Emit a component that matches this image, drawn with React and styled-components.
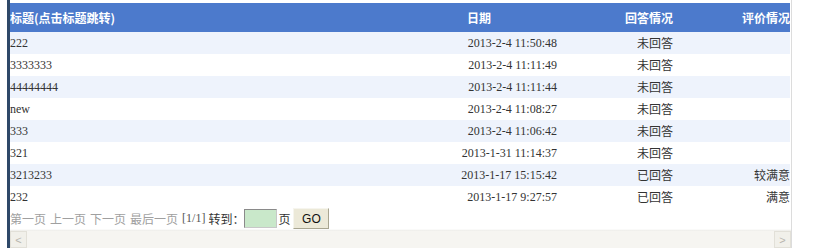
import React from "react";
import styled, { createGlobalStyle } from "styled-components";

const Global = createGlobalStyle`
  html, body { margin: 0; padding: 0; background: #fff; }
  body { width: 818px; height: 248px; overflow: hidden; }
`;

const Page = styled.div`
  height: 248px;
  margin-left: 7px;
  border-left: 3px solid #2e4868;
  width: 781px;
  border-right: 1px solid #dcdcdc;
  display: flex;
  flex-direction: column;
  overflow: hidden;
`;

const Table = styled.div`
  margin-top: 3px;
  width: 780px;
  display: grid;
  grid-template-columns: 447px 103px 116px 114px;
`;

const HeadCell = styled.div`
  height: 29px;
  line-height: 29px;
  background: #4c7acc;
  color: #fff;
  font-weight: bold;
  font-size: 12px;
  font-family: "Noto Sans CJK SC", "Liberation Sans", sans-serif;
  text-align: ${(p) => p.$align || "left"};
  padding-left: ${(p) => p.$pl || 0}px;
  padding-right: ${(p) => p.$pr || 0}px;
  white-space: nowrap;
`;

const Cell = styled.div`
  height: 22px;
  line-height: 22px;
  background: ${(p) => (p.$alt ? "#eef3fc" : "#fff")};
  color: #333;
  font-size: 12px;
  font-family: ${(p) =>
    p.$cjk
      ? '"Noto Sans CJK SC", "Liberation Sans", sans-serif'
      : '"Liberation Serif", "Noto Sans CJK SC", serif'};
  text-align: ${(p) => p.$align || "left"};
  padding-right: ${(p) => p.$pr || 0}px;
  white-space: nowrap;
  overflow: hidden;
`;

const Pager = styled.div`
  height: 22px;
  display: flex;
  align-items: center;
  font-size: 12px;
  font-family: "Noto Sans CJK SC", "Liberation Sans", sans-serif;
  color: #333;
  white-space: nowrap;
`;

const PageLink = styled.span`
  color: #a0a0a0;
  margin-right: 4px;
`;

const Count = styled.span`
  font-family: "Liberation Serif", serif;
  color: #555;
  margin-right: 3px;
`;

const JumpInput = styled.input`
  box-sizing: border-box;
  width: 33px;
  height: 19px;
  margin: 0 1px 0 0;
  padding: 0;
  background: #c9e8ca;
  border: 1px solid #8a8a8a;
  border-right-color: #c8c8c8;
  border-bottom-color: #c8c8c8;
  outline: none;
`;

const GoButton = styled.button`
  box-sizing: border-box;
  width: 36px;
  height: 21px;
  margin-left: 3px;
  padding: 0;
  background: #ece9d8;
  border: 1px solid #f6f5ee;
  border-right-color: #a8a590;
  border-bottom-color: #a8a590;
  font-family: "Liberation Sans", sans-serif;
  font-size: 12px;
  color: #111;
`;

const Spacer = styled.div`
  height: 6px;
  background: linear-gradient(#fff, #ecebe6);
`;

const ScrollBar = styled.div`
  height: 17px;
  display: flex;
  background: #f4f3ef;
`;

const ScrollBtn = styled.div`
  width: 17px;
  height: 17px;
  box-sizing: border-box;
  background: #f1f0ea;
  border: 1px solid #e2e0d8;
  display: flex;
  justify-content: center;
  padding-top: 2px;
  color: #b8b6ae;
  font-size: 11px;
  font-family: "Liberation Sans", sans-serif;
`;

const Track = styled.div`
  flex: 1;
  background: #f6f5f1;
`;

const rows = [
  ["222", "2013-2-4 11:50:48", "未回答", ""],
  ["3333333", "2013-2-4 11:11:49", "未回答", ""],
  ["44444444", "2013-2-4 11:11:44", "未回答", ""],
  ["new", "2013-2-4 11:08:27", "未回答", ""],
  ["333", "2013-2-4 11:06:42", "未回答", ""],
  ["321", "2013-1-31 11:14:37", "未回答", ""],
  ["3213233", "2013-1-17 15:15:42", "已回答", "较满意"],
  ["232", "2013-1-17 9:27:57", "已回答", "满意"],
];

export default function App() {
  return (
    <>
      <Global />
      <Page>
        <Table>
          <HeadCell>标题(点击标题跳转)</HeadCell>
          <HeadCell $pl={10}>日期</HeadCell>
          <HeadCell $align="right" $pr={3}>回答情况</HeadCell>
          <HeadCell $align="right">评价情况</HeadCell>
          {rows.map((r, i) => {
            const alt = i % 2 === 0;
            return (
              <React.Fragment key={i}>
                <Cell $alt={alt}>{r[0]}</Cell>
                <Cell $alt={alt} $align="right" $pr={3}>{r[1]}</Cell>
                <Cell $alt={alt} $cjk $align="right" $pr={3}>{r[2]}</Cell>
                <Cell $alt={alt} $cjk $align="right">{r[3]}</Cell>
              </React.Fragment>
            );
          })}
        </Table>
        <Pager>
          <PageLink>第一页</PageLink>
          <PageLink>上一页</PageLink>
          <PageLink>下一页</PageLink>
          <PageLink>最后一页</PageLink>
          <Count>[1/1]</Count>
          <span>转到：</span>
          <JumpInput type="text" />
          <span>页</span>
          <GoButton>GO</GoButton>
        </Pager>
        <Spacer />
        <ScrollBar>
          <ScrollBtn>&lt;</ScrollBtn>
          <Track />
          <ScrollBtn>&gt;</ScrollBtn>
        </ScrollBar>
      </Page>
    </>
  );
}
